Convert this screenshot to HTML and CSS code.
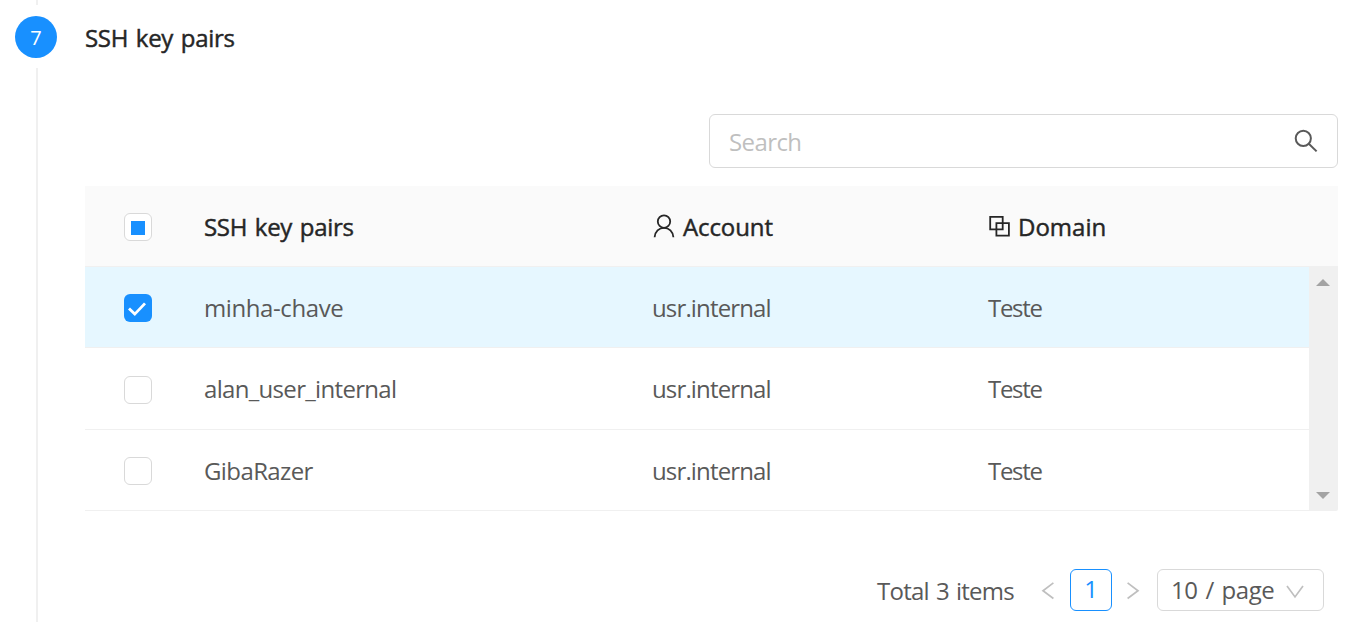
FILE: index.html
```html
<!DOCTYPE html>
<html lang="en">
<head>
<meta charset="utf-8">
<title>SSH key pairs</title>
<link rel="stylesheet" href="styles.css">
</head>
<body>
<main class="step">
  <div class="step-rail">
    <span class="rail-line rail-top"></span>
    <span class="step-number">7</span>
    <span class="rail-line rail-bottom"></span>
  </div>
  <section class="step-content">
    <h2 class="step-title"><span class="t-title">SSH key pairs</span></h2>
    <div class="search">
      <span class="placeholder">Search</span>
      <svg class="search-icon" viewBox="0 0 24 24"><circle cx="9.3" cy="9.3" r="7.6"/><path d="M14.8 14.8L22.6 22.4"/></svg>
    </div>
    <div class="table">
      <div class="row head">
        <span class="check partial"></span>
        <span class="cell name"><span class="t-title">SSH key pairs</span></span>
        <span class="cell account"><svg class="icon user" viewBox="0 0 22 24"><circle cx="11" cy="7.6" r="6.2"/><path d="M1.6 23.2C2 17.6 6 13.8 11 13.8S20 17.6 20.4 23.2"/></svg><span class="t-account">Account</span></span>
        <span class="cell domain"><svg class="icon block" viewBox="0 0 22 22"><path d="M1.2 1.9H13.7V14.4H1.2ZM7.4 8.1H19.9V20.6H7.4Z"/></svg><span class="t-domain">Domain</span></span>
      </div>
      <div class="table-body">
        <div class="rows">
          <div class="row selected">
            <span class="check checked"><svg viewBox="0 0 28 28"><path d="M5 14.4L10.8 20.1L21 9.4"/></svg></span>
            <span class="cell name"><span class="t-minha">minha-chave</span></span><span class="cell account"><span class="t-usr">usr.internal</span></span><span class="cell domain"><span class="t-teste">Teste</span></span>
          </div>
          <div class="row tall">
            <span class="check"></span>
            <span class="cell name"><span class="t-alan">alan_user_internal</span></span><span class="cell account"><span class="t-usr">usr.internal</span></span><span class="cell domain"><span class="t-teste">Teste</span></span>
          </div>
          <div class="row">
            <span class="check"></span>
            <span class="cell name"><span class="t-giba">GibaRazer</span></span><span class="cell account"><span class="t-usr">usr.internal</span></span><span class="cell domain"><span class="t-teste">Teste</span></span>
          </div>
        </div>
        <div class="scrollbar">
          <svg viewBox="0 0 14 7"><path d="M0 7L7 0L14 7Z"/></svg>
          <svg viewBox="0 0 14 7"><path d="M0 0H14L7 7Z"/></svg>
        </div>
      </div>
    </div>
    <div class="pagination">
      <span class="total">Total 3 items</span>
      <svg class="arrow prev" viewBox="0 0 12 18"><path d="M11.4 1.9L1 9.7L11.4 17.5"/></svg>
      <span class="page">1</span>
      <svg class="arrow next" viewBox="0 0 12 18"><path d="M.6 1.9L11 9.7L.6 17.5"/></svg>
      <span class="page-size"><span class="t-size">10 / page</span><svg class="down" viewBox="0 0 18 14"><path d="M1 .9L9 11.9L17 .9"/></svg></span>
    </div>
  </section>
</main>
</body>
</html>
```
FILE: styles.css
```css
* { box-sizing: border-box; }
body {
  margin: 0;
  height: 628px;
  overflow: hidden;
  background: #fff;
  color: #595959;
  font: 400 24px/34px "Open Sans", "Noto Sans", sans-serif;
  white-space: nowrap;
}
svg { display: block; flex: none; fill: none; overflow: visible; }
.step { display: flex; width: 1338px; height: 628px; }
.step-rail { display: flex; flex-direction: column; width: 85px; padding-left: 15px; }
.rail-line { width: 2px; margin-left: 21px; background: #f0f0f0; }
.rail-top { height: 5px; }
.rail-bottom { height: 554px; }
.step-number {
  width: 42px;
  height: 42px;
  margin: 11px 0 10px;
  border-radius: 50%;
  background: #1890ff;
  color: #fff;
  font-size: 20px;
  line-height: 43px;
  text-align: center;
}
.step-content { display: flex; flex: 1; flex-direction: column; min-width: 0; }
.step-title {
  height: 114px;
  margin: 0;
  padding-top: 21px;
  color: #262626;
  font-size: 24px;
  font-weight: 400;
  -webkit-text-stroke: .45px #262626;
}
.search {
  display: flex;
  align-items: center;
  align-self: flex-end;
  justify-content: space-between;
  width: 629px;
  height: 54px;
  padding: 0 19px 0 19px;
  border: 1px solid #d9d9d9;
  border-radius: 6px;
}
.placeholder { padding-top: 2px; color: #bfbfbf; letter-spacing: -.6px; }
.search-icon { width: 24px; height: 24px; stroke: #595959; stroke-width: 2; }
.table { margin-top: 18px; }
.row {
  display: flex;
  align-items: center;
  height: 81px;
  padding-left: 39px;
  border-bottom: 1px solid #f0f0f0;
}
.row.tall { height: 82px; }
.row.tall .cell { padding-top: 0; }
.head { background: #fafafa; color: #262626; -webkit-text-stroke: .45px #262626; }
.selected { background: #e6f7ff; }
.table-body { display: flex; height: 244px; }
.rows { flex: 1; }
.check {
  display: flex;
  align-items: center;
  justify-content: center;
  flex: none;
  width: 28px;
  height: 28px;
  margin-top: 2px;
  border: 1px solid #d9d9d9;
  border-radius: 6px;
  background: #fff;
}
.partial::before { content: ""; width: 14px; height: 14px; margin-top: 2px; background: #1890ff; }
.checked { border: 0; background: #1890ff; }
.checked svg { width: 28px; height: 28px; stroke: #fff; stroke-width: 2.8; }
.cell { display: flex; align-items: center; padding-top: 2px; }
.name { width: 448px; margin-left: 52px; }
.account { width: 336px; }
.icon { stroke: #262626; stroke-width: 1.8; }
.user { width: 22px; height: 24px; margin: -2px 8px 0 1px; }
.block { width: 22px; height: 22px; margin: -2px 7px 0 1px; }
.scrollbar {
  display: flex;
  flex-direction: column;
  align-items: center;
  justify-content: space-between;
  width: 29px;
  padding: 12px 1px 12px 0;
  border-radius: 0 0 2px;
  background: #f0f0f0;
}
.scrollbar svg { width: 14px; height: 7px; fill: #a3a3a3; }
.pagination {
  display: flex;
  align-items: center;
  height: 42px;
  margin-top: 58px;
  padding-left: 792px;
}
.total { width: 165px; padding-top: 2px; letter-spacing: -.75px; word-spacing: 1.6px; }
.arrow { width: 12px; height: 18px; stroke: #bfbfbf; stroke-width: 1.7; }
.page {
  width: 42px;
  height: 42px;
  margin: 0 15px 0 16px;
  border: 1px solid #1890ff;
  border-radius: 6px;
  color: #1890ff;
  line-height: 38px;
  text-align: center;
}
.page-size {
  display: flex;
  align-items: center;
  justify-content: space-between;
  width: 167px;
  height: 42px;
  margin-left: 18px;
  padding: 0 19px 0 13px;
  border: 1px solid #d9d9d9;
  border-radius: 6px;
}
.down { width: 18px; height: 14px; margin-top: 3px; stroke: #bfbfbf; stroke-width: 1.7; }
.t-title { letter-spacing: -.3px; word-spacing: 1.8px; }
.t-account { letter-spacing: -.1px; }
.t-domain { letter-spacing: 0; }
.t-minha { letter-spacing: -.4px; }
.t-usr { letter-spacing: -.85px; }
.t-alan { letter-spacing: -.68px; }
.t-giba { letter-spacing: -.6px; }
.t-teste { letter-spacing: -1.3px; }
.t-size { letter-spacing: -.5px; word-spacing: 2.2px; }
```
